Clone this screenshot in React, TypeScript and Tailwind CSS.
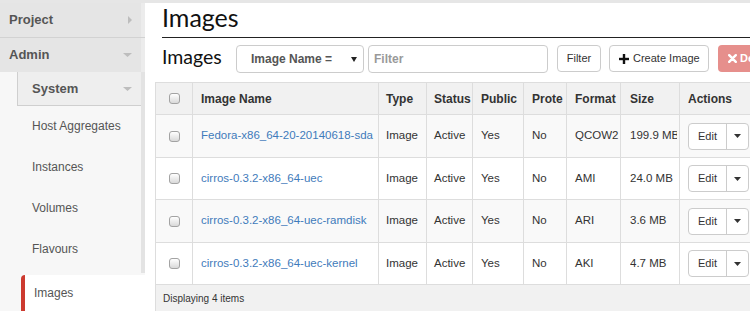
import React from "react";

const rows = [
  { name: "Fedora-x86_64-20-20140618-sda", fmt: "QCOW2", size: "199.9 MB" },
  { name: "cirros-0.3.2-x86_64-uec", fmt: "AMI", size: "24.0 MB" },
  { name: "cirros-0.3.2-x86_64-uec-ramdisk", fmt: "ARI", size: "3.6 MB" },
  { name: "cirros-0.3.2-x86_64-uec-kernel", fmt: "AKI", size: "4.7 MB" },
];

function Checkbox() {
  return (
    <div className="mx-auto w-[11px] h-[11px] rounded-[3px] border border-[#a3a3a3] bg-linear-to-b from-white to-[#d9d9d9]" />
  );
}

function TriDown({ color = "#bdbdbd", w = 9, h = 4 }: { color?: string; w?: number; h?: number }) {
  return (
    <svg width={w} height={h} viewBox={`0 0 ${w} ${h}`} className="shrink-0">
      <polygon points={`0,0 ${w},0 ${w / 2},${h}`} fill={color} />
    </svg>
  );
}

function TriRight() {
  return (
    <svg width="4" height="8" viewBox="0 0 4 8" className="shrink-0">
      <polygon points="0,0 4,4 0,8" fill="#bdbdbd" />
    </svg>
  );
}

const sideItems = ["Host Aggregates", "Instances", "Volumes", "Flavours"];

export default function App() {
  return (
    <div className="w-[750px] h-[311px] overflow-hidden border-t-[3px] border-[#e6e6e6] flex bg-white font-['Liberation_Sans',Arial,sans-serif]">
      {/* Sidebar */}
      <div className="w-[145px] shrink-0 flex flex-col bg-[#f7f7f7]">
        <div className="h-[34px] flex items-center justify-between pl-[9px] pr-[9px] bg-[#e5e5e5] border-r-4 border-[#ececec] text-[13px] font-bold text-[#555]">
          <span>Project</span>
          <TriRight />
        </div>
        <div className="h-px bg-[#d2d2d2]" />
        <div className="h-[34px] flex items-center justify-between pl-[9px] pr-[9px] bg-[#e5e5e5] border-r-4 border-[#ececec] text-[13px] font-bold text-[#555]">
          <span>Admin</span>
          <TriDown />
        </div>
        <div className="pl-[17px] flex flex-col flex-1">
          <div className="border-r-4 border-[#e3e3e3] pb-[3px]">
            <div className="h-[34px] flex items-center justify-between pl-[14px] pr-[9px] bg-[#eeeeee] border-l border-b border-[#cfcfcf] text-[13px] font-bold text-[#555]">
              <span>System</span>
              <TriDown />
            </div>
            {sideItems.map((s) => (
              <div key={s} className="h-[41px] flex items-center pl-[15px] pb-[2px] text-[12px] text-[#555]">
                {s}
              </div>
            ))}
          </div>
          <div className="mt-[2px] ml-[4px] flex-1 bg-white border-l-4 border-[#cc3a2f] rounded-tl-[4px] flex items-center pl-[9px] text-[12px] text-[#555]">
            Images
          </div>
        </div>
      </div>

      {/* Main */}
      <div className="flex-1 min-w-0 pl-[10px] overflow-hidden flex flex-col">
        <div className="ml-[7px] h-[35px] shrink-0 border-b border-[#222] pt-[1px] font-['Lato',sans-serif] text-[25px] leading-[26px] text-[#111]">
          Images
        </div>
        <div className="mt-[6px] h-[29px] shrink-0 flex items-start whitespace-nowrap">
          <div className="ml-[7px] w-[74px] shrink-0 font-['Lato',sans-serif] text-[19.5px] leading-[25px] text-[#111]">
            Images
          </div>
          <div className="w-[128px] h-[28px] shrink-0 mt-[1px] rounded-[4px] border border-[#ccc] flex items-center justify-between pl-[14px] pr-[6px] text-[12px] font-bold text-[#555]">
            <span>Image Name =</span>
            <TriDown color="#222" w={6} h={5} />
          </div>
          <div className="ml-[4px] w-[180px] h-[28px] shrink-0 mt-[1px] rounded-[4px] border border-[#ccc] flex items-center pl-[5px] text-[12px] font-bold text-[#999]">
            Filter
          </div>
          <div className="ml-[9px] w-[44px] h-[27px] shrink-0 mt-[1px] rounded-[4px] border border-[#ccc] flex items-center justify-center text-[11px] text-[#333]">
            Filter
          </div>
          <div className="ml-[8px] w-[100px] h-[27px] shrink-0 mt-[1px] rounded-[4px] border border-[#ccc] flex items-center pl-[9px] gap-[4px] text-[11px] text-[#333]">
            <svg width="10" height="10" viewBox="0 0 10 10" className="shrink-0">
              <rect x="3.8" y="0" width="2.4" height="10" fill="#111" />
              <rect x="0" y="3.8" width="10" height="2.4" fill="#111" />
            </svg>
            <span>Create Image</span>
          </div>
          <div className="ml-[9px] w-[80px] h-[27px] shrink-0 mt-[1px] rounded-[4px] bg-[#e68f8c] flex items-center pl-[10px] gap-[3px] text-[11px] font-bold text-white overflow-hidden">
            <svg width="9" height="9" viewBox="0 0 9 9" className="shrink-0">
              <path d="M1.2 1.2 L7.8 7.8 M7.8 1.2 L1.2 7.8" stroke="#fff" strokeWidth="2.4" strokeLinecap="round" />
            </svg>
            <span className="shrink-0">Delete Images</span>
          </div>
        </div>

        <table className="mt-[9px] table-fixed border-collapse w-[604px] shrink-0 text-[#333]">
          <colgroup>
            <col className="w-[37px]" />
            <col className="w-[186px]" />
            <col className="w-[48px]" />
            <col className="w-[46px]" />
            <col className="w-[51px]" />
            <col className="w-[43px]" />
            <col className="w-[54px]" />
            <col className="w-[59px]" />
            <col className="w-[80px]" />
          </colgroup>
          <thead>
            <tr className="h-[32px] bg-[#f1f1f1] text-[12px] font-bold">
              <th className="border border-[#ddd] p-0">
                <Checkbox />
              </th>
              <th className="border border-[#ddd] pl-[8px] text-left">Image Name</th>
              <th className="border border-[#ddd] pl-[7px] text-left">Type</th>
              <th className="border border-[#ddd] pl-[7px] text-left whitespace-nowrap overflow-hidden">Status</th>
              <th className="border border-[#ddd] pl-[8px] text-left">Public</th>
              <th className="border border-[#ddd] pl-[8px] text-left whitespace-nowrap overflow-hidden">Prote</th>
              <th className="border border-[#ddd] pl-[8px] text-left">Format</th>
              <th className="border border-[#ddd] pl-[9px] text-left">Size</th>
              <th className="border border-[#ddd] pl-[8px] text-left">Actions</th>
            </tr>
          </thead>
          <tbody>
            {rows.map((r, i) => (
              <tr key={r.name} className={(i % 2 === 0 ? "bg-[#f9f9f9] h-[43px]" : "bg-white h-[42px]") + " text-[11.5px]"}>
                <td className="border border-[#ddd] p-0">
                  <Checkbox />
                </td>
                <td className="border border-[#ddd] pl-[8px] whitespace-nowrap overflow-hidden text-[#3f7bbb]">{r.name}</td>
                <td className="border border-[#ddd] pl-[7px]">Image</td>
                <td className="border border-[#ddd] pl-[7px]">Active</td>
                <td className="border border-[#ddd] pl-[8px]">Yes</td>
                <td className="border border-[#ddd] pl-[8px]">No</td>
                <td className="border border-[#ddd] pl-[8px]">{r.fmt}</td>
                <td className="border border-[#ddd] pl-[9px] pr-[2px]">
                  <div className="whitespace-nowrap overflow-hidden">{r.size}</div>
                </td>
                <td className="border border-[#ddd] pl-[8px] pr-0">
                  <div className="flex w-[61px] h-[27px] rounded-[4px] border border-[#ccc] bg-white">
                    <div className="w-[38px] flex items-center justify-center border-r border-[#ccc] text-[11px] text-[#333]">Edit</div>
                    <div className="flex-1 flex items-center justify-center">
                      <TriDown color="#333" w={7} h={4} />
                    </div>
                  </div>
                </td>
              </tr>
            ))}
          </tbody>
          <tfoot>
            <tr className="h-[28px] bg-[#f1f1f1]">
              <td colSpan={9} className="border border-[#ddd] pl-[7px] text-[10px] text-[#333]">
                Displaying 4 items
              </td>
            </tr>
          </tfoot>
        </table>
      </div>
    </div>
  );
}
